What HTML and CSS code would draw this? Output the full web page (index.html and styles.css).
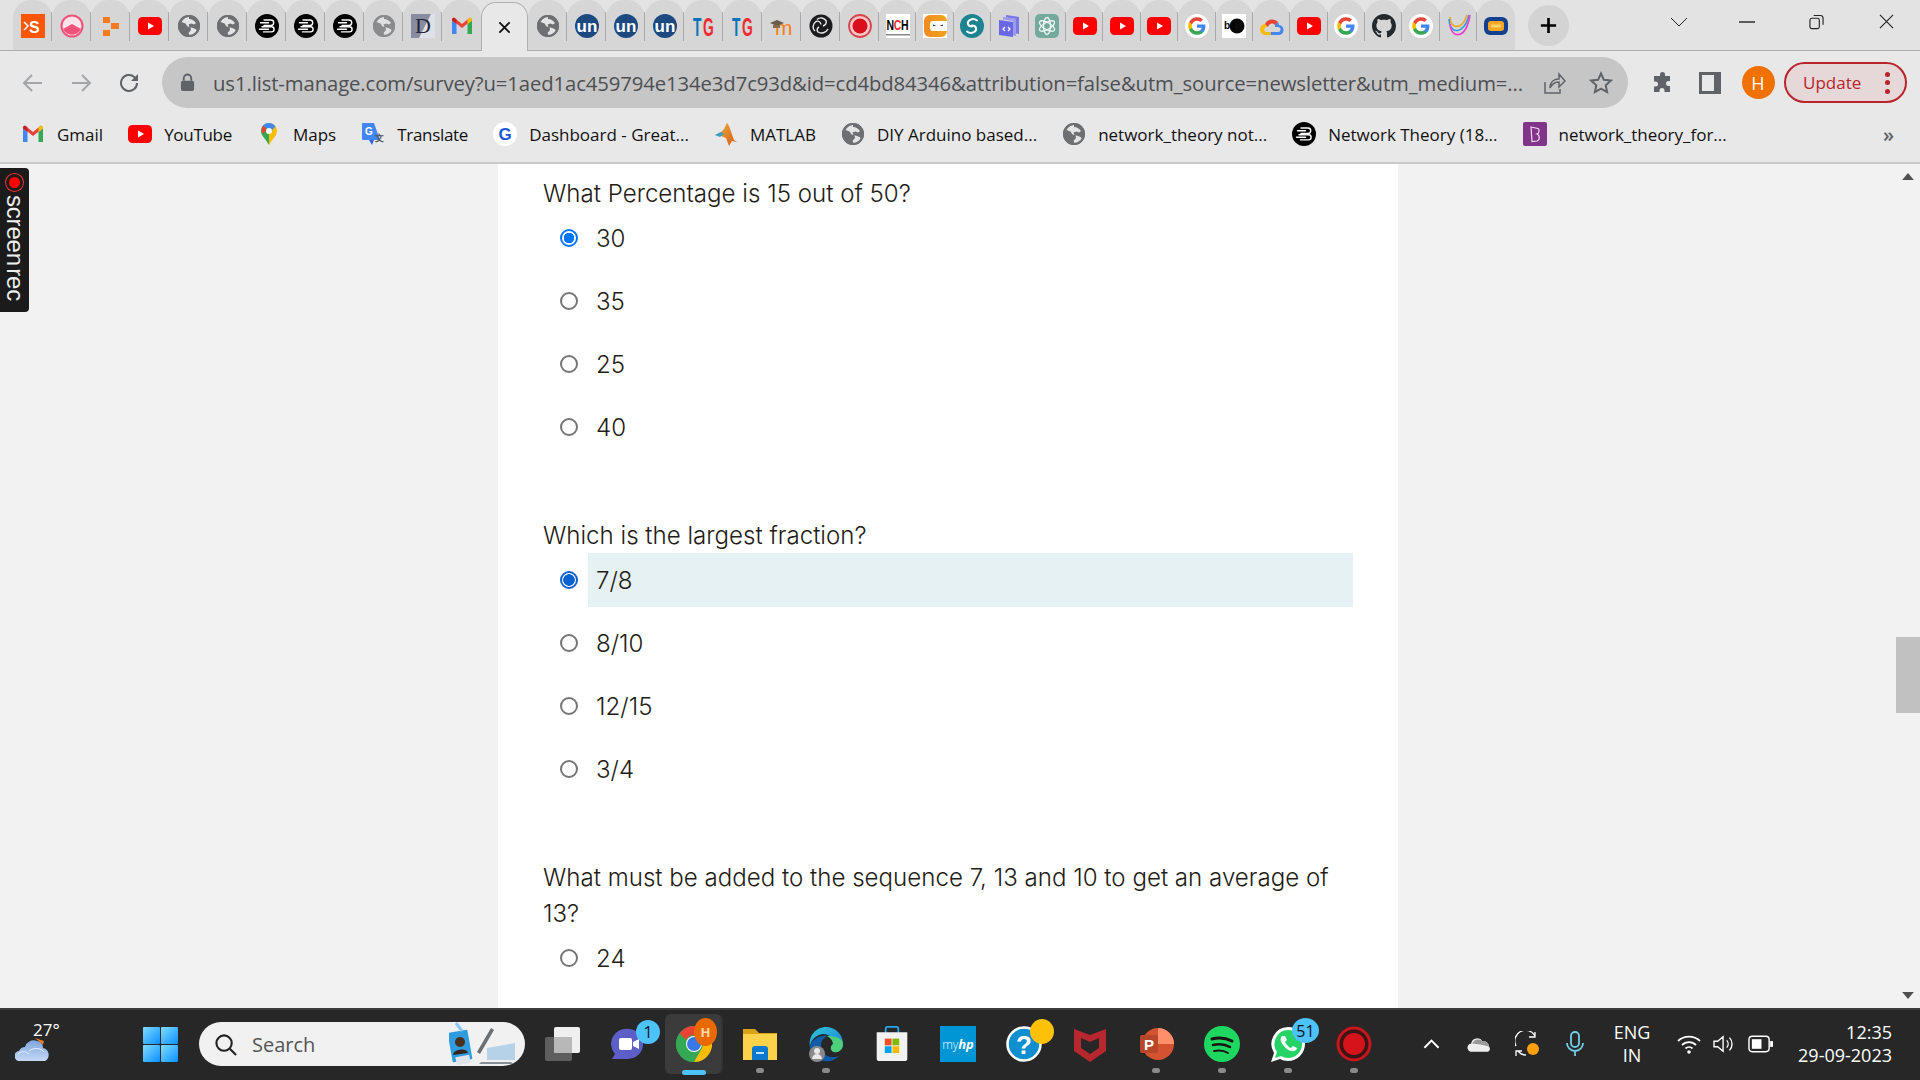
FILE: index.html
```html
<!DOCTYPE html>
<html lang="en">
<head>
<meta charset="utf-8">
<title>Survey</title>
<link rel="stylesheet" href="styles.css">
</head>
<body>
<svg class="defs" aria-hidden="true">
  <defs>
    <linearGradient id="win" x1="0" y1="0" x2="1" y2="1"><stop offset="0" stop-color="#7fdcff"/><stop offset="1" stop-color="#0a8fff"/></linearGradient>
    <linearGradient id="edge" x1="0" y1="0" x2="1" y2="1"><stop offset="0" stop-color="#2bc6d8"/><stop offset="1" stop-color="#1f7fd6"/></linearGradient>
    <linearGradient id="matl" x1="0" y1="0" x2="1" y2="1"><stop offset="0" stop-color="#e8b43a"/><stop offset="1" stop-color="#d8591c"/></linearGradient>
    <linearGradient id="ccg" x1="0" y1="0" x2="1" y2="0"><stop offset="0" stop-color="#f08a24"/><stop offset="1" stop-color="#f2a51a"/></linearGradient>
    <linearGradient id="cld" x1="0" y1="0" x2="0" y2="1"><stop offset="0" stop-color="#7fa6e0"/><stop offset="1" stop-color="#c4d9f5"/></linearGradient>
    <symbol id="i-s" viewBox="0 0 24 24"><rect width="24" height="24" fill="#fb5607"/><path d="M3 8l4 4-4 4" fill="none" stroke="#fff" stroke-width="1.600"/><text x="8" y="19" class="t-bold t16 f-w">S</text></symbol>
    <symbol id="i-pink" viewBox="0 0 24 24"><circle cx="12" cy="12" r="10.500" fill="#fde4e8" stroke="#f0527a" stroke-width="2"/><path d="M3 15l9-5 9 5a10 10 0 0 1-18 0z" fill="#f0527a"/></symbol>
    <symbol id="i-orange" viewBox="0 0 24 24"><path d="M4 3h7v6H4zM12 9h8v6h-8zM4 16h7v6H4z" fill="#f47a1f"/></symbol>
    <symbol id="i-yt" viewBox="0 0 24 24"><rect y="3" width="24" height="18" rx="4.500" fill="#f00"/><path d="M10 8.500l6 3.500-6 3.500z" fill="#fff"/></symbol>
    <symbol id="i-globe" viewBox="0 0 24 24"><circle cx="12" cy="12" r="11" fill="#6d6f72"/><path d="M12 2.500c-3 .4-6 2.500-7.500 5.500l4 1.500 2 3 3 .5.500 3-2.500 3 1.500 3c3-.3 6-2.500 7.500-5l-2-2-2.500-1-3.500-1-1-2.500 3-1 2.500 1 2-1.500c-1.500-2-4-4-7-4z" fill="#f2f2f2" opacity=".9"/><circle cx="12" cy="12" r="10" fill="none" stroke="#6d6f72" stroke-width="2"/></symbol>
    <symbol id="i-b3" viewBox="0 0 24 24"><circle cx="12" cy="12" r="12" fill="#000"/><g fill="none" stroke="#fff" stroke-width="1.400" stroke-linecap="round"><path d="M9 6h7a2.700 2.700 0 0 1 0 5.400H9"/><path d="M5.500 8.700h8"/><path d="M7 12.700h9.500a2.600 2.600 0 0 1 0 5.200H8.500"/><path d="M4.500 15.300h9"/></g></symbol>
    <symbol id="i-d" viewBox="0 0 24 24"><rect width="24" height="24" fill="#dfe0e8"/><path d="M0 0h20L8 24H0z" fill="#6c7088" opacity=".75"/><text x="12" y="19" class="t-serif-r t22 f-dk" text-anchor="middle">D</text></symbol>
    <symbol id="i-gm" viewBox="0 0 24 24"><path d="M2 6v14h4.500V10z" fill="#4285f4"/><path d="M17.500 10v10H22V6z" fill="#34a853"/><path d="M2 6l10 8 10-8-2-2.500-8 6.500-8-6.500z" fill="#ea4335"/><path d="M2 6.500V4.500L4 3.500l2.500 2V10z" fill="#c5221f"/><path d="M22 6.500V4.500L20 3.500l-2.500 2V10z" fill="#fbbc04"/></symbol>
    <symbol id="i-un" viewBox="0 0 24 24"><circle cx="12" cy="12" r="12" fill="#1c4a80"/><text x="12" y="17.500" class="t-bold t17 f-w" text-anchor="middle">un</text></symbol>
    <symbol id="i-tg" viewBox="0 0 24 24"><text transform="translate(1 22) scale(.66 1.220)" class="t-bold t21 f-bl">T</text><text transform="translate(11 22) scale(.66 1.220)" class="t-bold t21 f-rd">G</text></symbol>
    <symbol id="i-moodle" viewBox="0 0 24 24"><text x="5" y="21" class="t-norm t21 f-or">m</text><path d="M0 9l7-3 7 3-7 3z" fill="#6a5a4a"/><path d="M3 11v3h7v-3" fill="#8a6a4a"/></symbol>
    <symbol id="i-obs" viewBox="0 0 24 24"><circle cx="12" cy="12" r="11.500" fill="#1c1c1e"/><g fill="none" stroke="#eee" stroke-width="1.400"><path d="M8 5.500a6 6 0 0 1 9 1c1 2.500-.5 4.500-3 5.500"/><path d="M6 17c-3-2.500-2.500-7 1-9.500 2-1 4.500 0 5 3"/><path d="M19 15c-2 4-7 5-10 3-1.500-1.500-1-4 1-5"/></g></symbol>
    <symbol id="i-rec" viewBox="0 0 24 24"><circle cx="12" cy="12" r="11" fill="#f2c8c8" stroke="#d8454c" stroke-width="1.800"/><circle cx="12" cy="12" r="7.500" fill="#d9101b"/></symbol>
    <symbol id="i-nch" viewBox="0 0 24 24"><rect width="24" height="24" fill="#fff"/><text transform="translate(.5 16) scale(1.050 1.500)" class="t-bold t12 f-k">N<tspan class="f-rd">C</tspan>H</text><rect y="20" width="24" height="1.500" fill="#888"/></symbol>
    <symbol id="i-cc" viewBox="0 0 24 24"><rect width="24" height="24" fill="#fff"/><rect x="1" y="1" width="23" height="22" rx="6" fill="url(#ccg)"/><path d="M24 7H10a3 3 0 0 0-3 3v4a3 3 0 0 0 3 3h14z" fill="#fff"/><path d="M10 10.500l3.500 1.500H10zM20 10.500L16.500 12H20z" fill="#333"/></symbol>
    <symbol id="i-teal" viewBox="0 0 24 24"><circle cx="12" cy="12" r="12" fill="#1d8390"/><g fill="none" stroke="#fff" stroke-width="2" stroke-linecap="round"><path d="M17 6.500C13 3.500 7 6 8 10c.6 2 2.500 2.500 4 2.500"/><path d="M7 17.500c4 3 10 .5 9-3.500-.6-2-2.500-2.500-4-2.500"/></g></symbol>
    <symbol id="i-stack" viewBox="0 0 24 24"><path d="M8 1l13 2v17l-3-.5V5L8 3.500z" fill="#7a78e8"/><path d="M5 3l13 2v17l-3-.5V7L5 5.500z" fill="#9b9af0"/><path d="M1 6l14 2v15L1 21z" fill="#6a67e6"/><path d="M7 13l-2 2 2 2M10 13l2 2-2 2" fill="none" stroke="#fff" stroke-width="1.200"/></symbol>
    <symbol id="i-gpt" viewBox="0 0 24 24"><rect width="24" height="24" rx="5" fill="#74aa9c"/><g fill="none" stroke="#f0f6f4" stroke-width="1.300"><ellipse cx="12" cy="12" rx="3.500" ry="8.500"/><ellipse cx="12" cy="12" rx="3.500" ry="8.500" transform="rotate(60 12 12)"/><ellipse cx="12" cy="12" rx="3.500" ry="8.500" transform="rotate(120 12 12)"/></g></symbol>
    <symbol id="i-g" viewBox="0 0 24 24"><circle cx="12" cy="12" r="12" fill="#fff"/><g transform="translate(2.400 2.400) scale(.8)"><path d="M22.560 12.250c0-.78-.07-1.530-.2-2.250H12v4.260h5.920c-.26 1.370-1.040 2.530-2.210 3.310v2.770h3.570c2.080-1.920 3.280-4.740 3.280-8.090z" fill="#4285f4"/><path d="M12 23c2.970 0 5.460-.98 7.280-2.660l-3.570-2.770c-.98.66-2.230 1.060-3.710 1.060-2.860 0-5.290-1.930-6.160-4.530H2.180v2.840C3.990 20.530 7.700 23 12 23z" fill="#34a853"/><path d="M5.840 14.090c-.22-.66-.35-1.360-.35-2.090s.13-1.430.35-2.090V7.070H2.180C1.430 8.550 1 10.220 1 12s.43 3.450 1.180 4.930l2.850-2.220.81-.62z" fill="#fbbc05"/><path d="M12 5.380c1.620 0 3.060.56 4.210 1.640l3.150-3.150C17.450 2.090 14.970 1 12 1 7.700 1 3.990 3.470 2.180 7.070l3.660 2.840c.87-2.600 3.300-4.530 6.160-4.530z" fill="#ea4335"/></g></symbol>
    <symbol id="i-gblue" viewBox="0 0 24 24"><circle cx="12" cy="12" r="12" fill="#fff"/><text x="12" y="18" class="t-bold t17 f-gb" text-anchor="middle">G</text></symbol>
    <symbol id="i-bep" viewBox="0 0 24 24"><rect width="24" height="24" fill="#fff"/><circle cx="15" cy="12" r="7.500" fill="#0a0a0a"/><text x="2" y="15" class="t-bold t10 f-k">be</text></symbol>
    <symbol id="i-cloud" viewBox="0 0 24 24"><path d="M6 21a5.500 5.500 0 0 1-1-11l3 3a2.500 2.500 0 0 0-2 5l5 0v3z" fill="#fbbc04"/><path d="M5 10a8 8 0 0 1 13-2l-3 3a4 4 0 0 0-7 2z" fill="#ea4335"/><path d="M18 8a8 8 0 0 1 1 3 5 5 0 0 1-1 10h-7v-3h7a2 2 0 0 0 0-5h-3l0-2z" fill="#4285f4"/></symbol>
    <symbol id="i-gh" viewBox="0 0 16 16"><path fill="#24292e" d="M8 0C3.580 0 0 3.580 0 8c0 3.540 2.290 6.530 5.470 7.590.4.070.55-.17.55-.38 0-.19-.01-.82-.01-1.490-2.010.37-2.530-.49-2.690-.94-.09-.23-.48-.94-.82-1.130-.28-.15-.68-.52-.01-.53.63-.01 1.080.58 1.230.82.720 1.210 1.870.87 2.330.66.070-.52.28-.87.51-1.070-1.780-.2-3.640-.89-3.640-3.950 0-.87.31-1.590.82-2.150-.08-.2-.36-1.020.08-2.120 0 0 .67-.21 2.200.82.640-.18 1.320-.27 2-.27.680 0 1.360.09 2 .27 1.530-1.040 2.200-.82 2.200-.82.44 1.100.16 1.920.08 2.120.51.56.82 1.270.82 2.150 0 3.070-1.870 3.750-3.650 3.950.29.25.54.73.54 1.480 0 1.070-.01 1.930-.01 2.200 0 .21.15.46.55.38A8.013 8.013 0 0 0 16 8c0-4.420-3.580-8-8-8z"/></symbol>
    <symbol id="i-swirl" viewBox="0 0 24 24"><g fill="none" stroke-width="1.600"><path d="M3 3c0 12 12 14 17-2" stroke="#f2a51a"/><path d="M2 5c0 15 15 17 20-4" stroke="#2f9be0"/><path d="M3 10c1 15 16 16 20-9" stroke="#ef3ecf"/></g></symbol>
    <symbol id="i-pill" viewBox="0 0 24 24"><rect y="3" width="24" height="18" rx="6" fill="#13408f"/><rect x="4" y="7" width="16" height="10" rx="3" fill="#f5a623"/><rect x="7" y="10.500" width="10" height="3" rx="1" fill="#f7d26b"/></symbol>
    <symbol id="i-byju" viewBox="0 0 24 24"><rect width="24" height="24" rx="2" fill="#813588"/><path d="M8 5l7 1.500c2 1 1 5-1 5.500 3 1 3 6 0 7l-5 .5z" fill="none" stroke="#f3d9f3" stroke-width="1.200"/></symbol>
    <symbol id="i-maps" viewBox="0 0 24 24"><path d="M12 1a8 8 0 0 0-8 8c0 5 5 8 8 14V1z" fill="#34a853"/><path d="M12 1a8 8 0 0 1 8 8c0 5-5 8-8 14V1z" fill="#fbbc04"/><path d="M6 3.500L10 7 6 12a8 8 0 0 1 0-8.500z" fill="#ea4335"/><path d="M12 1a8 8 0 0 1 6.500 3.500L14 9l-4-2.500L6 3.500A8 8 0 0 1 12 1z" fill="#4285f4"/><circle cx="12" cy="9" r="3" fill="#fff"/></symbol>
    <symbol id="i-trans" viewBox="0 0 24 24"><path d="M11 5h11a1 1 0 0 1 1 1v14a1 1 0 0 1-1 1H12z" fill="#e8eaed"/><path d="M2 1h11l6 17H2a1 1 0 0 1-1-1V2a1 1 0 0 1 1-1z" fill="#4285f4"/><path d="M8 18h5l-2 5z" fill="#3367d6"/><text x="4" y="13" class="t-bold t10 f-w">G</text><text x="14" y="19" class="t-bold t9 f-gr">文</text></symbol>
    <symbol id="i-matlab" viewBox="0 0 24 24"><path d="M1 13l6-3 3-3 3-6c2 1 4 9 7 17l3 2-5-1-3 5-3-8-5-2z" fill="url(#matl)"/><path d="M1 13l6-3 3 2-4 3z" fill="#3aa0c8"/></symbol>
    <symbol id="i-puzzle" viewBox="0 0 24 24"><path d="M10 3.500a2.500 2.500 0 0 1 5 0V5h5v5h-1.500a2.500 2.500 0 0 0 0 5H20v6h-5.500v-1.500a2.500 2.500 0 0 0-5 0V21H4v-5.500h1.500a2.500 2.500 0 0 0 0-5H4V5h6z" fill="#5f6368"/></symbol>
    <symbol id="i-win" viewBox="0 0 35 35"><g fill="url(#win)"><rect width="17" height="17" rx="1"/><rect x="18" width="17" height="17" rx="1"/><rect y="18" width="17" height="17" rx="1"/><rect x="18" y="18" width="17" height="17" rx="1"/></g></symbol>
    <symbol id="i-weather" viewBox="0 0 36 24"><path d="M20 1l9 3-1 4z" fill="#e8792b"/><path d="M5 24a5 5 0 0 1-1-10 7 7 0 0 1 6-4 9 9 0 0 1 12-6c4 1 6 4 6 7a7 7 0 0 1 2 13z" fill="url(#cld)"/><path d="M3 17c4-4 9-2 11 0M14 14c5-4 12-3 15 1" fill="none" stroke="#e6effb" stroke-width="1"/></symbol>
    <symbol id="i-deco" viewBox="0 0 70 44"><rect x="1" y="9" width="20" height="30" rx="1" fill="#2f9ce0" transform="rotate(-10 11 24)"/><circle cx="11" cy="20" r="5" fill="#4a2f20"/><path d="M4 33c0-6 14-8 15-2z" fill="#33251c"/><path d="M7 1l6 8" stroke="#8dc6f0" stroke-width="3"/><rect x="7" y="34" width="14" height="8" fill="#dfe3ea" transform="rotate(-10 14 38)"/><path d="M28 30L42 6l3 2-14 24z" fill="#6b6f72"/><path d="M38 26l28-5v17l-28 0z" fill="#b6d2e8"/><path d="M32 40h30l3 2H30z" fill="#8a8f96"/></symbol>
    <symbol id="i-taskview" viewBox="0 0 36 36"><rect x="1" y="11" width="27" height="24" rx="2" fill="#5e5e5e"/><rect x="10" y="1" width="26" height="26" rx="2" fill="#fff" opacity=".93"/><path d="M10 11h18v16H10z" fill="#b8b8b8"/></symbol>
    <symbol id="i-teams" viewBox="0 0 36 36"><path d="M18 3a15 15 0 0 1 0 30H2l3-5A15 15 0 0 1 18 3z" fill="#5b5fc7"/><rect x="9" y="12" width="13" height="12" rx="2" fill="#fff"/><path d="M23 16l6-3v10l-6-3z" fill="#fff"/></symbol>
    <symbol id="i-chrome" viewBox="0 0 36 36"><circle cx="18" cy="18" r="18" fill="#34a853"/><path d="M18 0a18 18 0 0 1 15.600 9H18a9 9 0 0 0-8 5L3.400 7.500A18 18 0 0 1 18 0z" fill="#ea4335"/><path d="M3.400 7.500A18 18 0 0 0 18 36l7.500-13a9 9 0 0 1-15.500-9z" fill="#34a853"/><path d="M33.600 9A18 18 0 0 1 18 36l7.800-13.500A9 9 0 0 0 26 13z" fill="#fbbc04"/><path d="M33.600 9H18a9 9 0 0 1 8 5z" fill="#ea4335"/><circle cx="18" cy="18" r="8" fill="#fff"/><circle cx="18" cy="18" r="7" fill="#3b78e7"/></symbol>
    <symbol id="i-folder" viewBox="0 0 36 36"><path d="M1 3h12l4 4h18v6H1z" fill="#d9a21b"/><path d="M1 8h34v26H1z" fill="#fcd24b"/><path d="M10 23a3 3 0 0 1 3-3h10a3 3 0 0 1 3 3v11H10z" fill="#0b79d0"/><rect x="14" y="26" width="8" height="2" fill="#bfe3ff"/></symbol>
    <symbol id="i-edge" viewBox="0 0 36 36"><path d="M18 1a17 17 0 0 1 17 17c0 6-5 9-9 8s-4-6-1-8C25 10 18 6 11 9 4 12 2 18 2 21 0 10 8 1 18 1z" fill="url(#edge)"/><path d="M35 18c0 6-5 9-9 8s-4-6-1-8c0-3-2-6-6-8 8 0 16 2 16 8z" fill="#4dd07a"/><path d="M2 21a17 17 0 0 0 29 9c-5 2-14 2-17-6s2-13 6-14C11 9 3 14 2 21z" fill="#0f5ca8"/><circle cx="9" cy="28" r="8" fill="#8a8a8a"/><circle cx="9" cy="25" r="3" fill="#e8e8e8"/><path d="M4 33a5 5 0 0 1 10 0z" fill="#e8e8e8"/></symbol>
    <symbol id="i-store" viewBox="0 0 36 40"><path d="M11 8V3a2 2 0 0 1 2-2h10a2 2 0 0 1 2 2v5" fill="none" stroke="#22a7e8" stroke-width="2"/><path d="M1 7h34v29a3 3 0 0 1-3 3H4a3 3 0 0 1-3-3z" fill="#f2f2f2"/><rect x="10" y="14" width="7.500" height="7.500" fill="#f25022"/><rect x="18.500" y="14" width="7.500" height="7.500" fill="#7fba00"/><rect x="10" y="22.500" width="7.500" height="7.500" fill="#00a4ef"/><rect x="18.500" y="22.500" width="7.500" height="7.500" fill="#ffb900"/></symbol>
    <symbol id="i-help" viewBox="0 0 36 36"><circle cx="18" cy="18" r="16.500" fill="#0f8fd0" stroke="#fff" stroke-width="2.500"/><text x="18" y="28" class="t-bold t26 f-w" text-anchor="middle">?</text></symbol>
    <symbol id="i-mcafee" viewBox="0 0 32 36"><path d="M0 3l16 6 16-6v22L16 36 0 25zM7 12v10l9 6 9-6V12l-9 4z" fill="#b7282e" fill-rule="evenodd"/></symbol>
    <symbol id="i-ppt" viewBox="0 0 36 36"><circle cx="20" cy="18" r="16" fill="#d35230"/><path d="M20 2a16 16 0 0 1 16 16H20z" fill="#ff8f6b"/><rect x="2" y="9" width="18" height="18" rx="2" fill="#b7472a"/><text x="11" y="24" class="t-bold t15 f-w" text-anchor="middle">P</text></symbol>
    <symbol id="i-spotify" viewBox="0 0 36 36"><circle cx="18" cy="18" r="18" fill="#1ed760"/><g fill="none" stroke="#191414" stroke-linecap="round"><path d="M8 13c7-2 14-1 20 2" stroke-width="3"/><path d="M9 19c6-1.500 12-1 17 2" stroke-width="2.500"/><path d="M10 25c5-1 10-.7 14 2" stroke-width="2"/></g></symbol>
    <symbol id="i-wa" viewBox="0 0 36 36"><path d="M18 1a17 17 0 0 1 0 34c-3 0-6-1-8-2l-9 3 3-9A17 17 0 0 1 18 1z" fill="#fff"/><path d="M18 4a14 14 0 0 1 0 28c-3 0-5-1-7-2l-6 2 2-6A14 14 0 0 1 18 4z" fill="#25d366"/><path d="M12 10c-2 2-2 5 1 9s8 7 11 6c2-.5 3-2 3-3l-4-2-2 2c-2-.5-5-4-6-6l2-2-2-4z" fill="#fff"/></symbol>
    <symbol id="i-recbig" viewBox="0 0 36 36"><circle cx="18" cy="18" r="16" fill="#3a1515" stroke="#c8161d" stroke-width="3"/><circle cx="18" cy="18" r="11" fill="#d6131b"/></symbol>
    <symbol id="i-cloudw" viewBox="0 0 24 16"><path d="M5 15a4 4 0 0 1-1-8 6 6 0 0 1 11-2 5 5 0 0 1 6 5 3 3 0 0 1-1 5z" fill="#eee"/><path d="M5 7a6 6 0 0 1 10-2 5 5 0 0 1 6 5l-8-2z" fill="#999"/></symbol>
  </defs>
</svg>

<header class="chrome">
  <div class="tabstrip">
    <div class="tabs">
      <div class="tab"><div class="tab-in"><svg class="fav"><use href="#i-s"/></svg></div></div>
      <div class="tab"><div class="tab-in"><svg class="fav"><use href="#i-pink"/></svg></div></div>
      <div class="tab"><div class="tab-in"><svg class="fav"><use href="#i-orange"/></svg></div></div>
      <div class="tab"><div class="tab-in"><svg class="fav"><use href="#i-yt"/></svg></div></div>
      <div class="tab"><div class="tab-in"><svg class="fav"><use href="#i-globe"/></svg></div></div>
      <div class="tab"><div class="tab-in"><svg class="fav"><use href="#i-globe"/></svg></div></div>
      <div class="tab"><div class="tab-in"><svg class="fav"><use href="#i-b3"/></svg></div></div>
      <div class="tab"><div class="tab-in"><svg class="fav"><use href="#i-b3"/></svg></div></div>
      <div class="tab"><div class="tab-in"><svg class="fav"><use href="#i-b3"/></svg></div></div>
      <div class="tab"><div class="tab-in"><svg class="fav faded"><use href="#i-globe"/></svg></div></div>
      <div class="tab"><div class="tab-in"><svg class="fav"><use href="#i-d"/></svg></div></div>
      <div class="tab"><div class="tab-in no-sep"><svg class="fav"><use href="#i-gm"/></svg></div></div>
      <div class="tab-active"><svg class="close" viewBox="0 0 14 14"><path d="M1.500 1.500l11 11M12.500 1.500l-11 11"/></svg></div>
      <div class="tab"><div class="tab-in"><svg class="fav"><use href="#i-globe"/></svg></div></div>
      <div class="tab"><div class="tab-in"><svg class="fav"><use href="#i-un"/></svg></div></div>
      <div class="tab"><div class="tab-in"><svg class="fav"><use href="#i-un"/></svg></div></div>
      <div class="tab"><div class="tab-in"><svg class="fav"><use href="#i-un"/></svg></div></div>
      <div class="tab"><div class="tab-in"><svg class="fav"><use href="#i-tg"/></svg></div></div>
      <div class="tab"><div class="tab-in"><svg class="fav"><use href="#i-tg"/></svg></div></div>
      <div class="tab"><div class="tab-in"><svg class="fav"><use href="#i-moodle"/></svg></div></div>
      <div class="tab"><div class="tab-in"><svg class="fav"><use href="#i-obs"/></svg></div></div>
      <div class="tab"><div class="tab-in"><svg class="fav"><use href="#i-rec"/></svg></div></div>
      <div class="tab narrow"><div class="tab-in"><svg class="fav"><use href="#i-nch"/></svg></div></div>
      <div class="tab narrow"><div class="tab-in"><svg class="fav"><use href="#i-cc"/></svg></div></div>
      <div class="tab narrow"><div class="tab-in"><svg class="fav"><use href="#i-teal"/></svg></div></div>
      <div class="tab narrow"><div class="tab-in"><svg class="fav"><use href="#i-stack"/></svg></div></div>
      <div class="tab narrow"><div class="tab-in"><svg class="fav"><use href="#i-gpt"/></svg></div></div>
      <div class="tab narrow"><div class="tab-in"><svg class="fav"><use href="#i-yt"/></svg></div></div>
      <div class="tab narrow"><div class="tab-in"><svg class="fav"><use href="#i-yt"/></svg></div></div>
      <div class="tab narrow"><div class="tab-in"><svg class="fav"><use href="#i-yt"/></svg></div></div>
      <div class="tab narrow"><div class="tab-in"><svg class="fav"><use href="#i-g"/></svg></div></div>
      <div class="tab narrow"><div class="tab-in"><svg class="fav"><use href="#i-bep"/></svg></div></div>
      <div class="tab narrow"><div class="tab-in"><svg class="fav"><use href="#i-cloud"/></svg></div></div>
      <div class="tab narrow"><div class="tab-in"><svg class="fav"><use href="#i-yt"/></svg></div></div>
      <div class="tab narrow"><div class="tab-in"><svg class="fav"><use href="#i-g"/></svg></div></div>
      <div class="tab narrow"><div class="tab-in"><svg class="fav"><use href="#i-gh"/></svg></div></div>
      <div class="tab narrow"><div class="tab-in"><svg class="fav"><use href="#i-g"/></svg></div></div>
      <div class="tab narrow"><div class="tab-in"><svg class="fav"><use href="#i-swirl"/></svg></div></div>
      <div class="tab narrow"><div class="tab-in no-sep"><svg class="fav"><use href="#i-pill"/></svg></div></div>
    </div>
    <div class="newtab"><svg viewBox="0 0 20 20"><path d="M10 2v16M2 10h16"/></svg></div>
    <div class="winctl">
      <svg class="wc wc-drop" viewBox="0 0 18 10"><path d="M1 1l8 8 8-8"/></svg>
      <svg class="wc wc-min" viewBox="0 0 16 2"><path d="M0 1h16"/></svg>
      <svg class="wc wc-max" viewBox="0 0 16 16"><rect x="1" y="4" width="10" height="11" rx="2"/><path d="M5 1h7a3 3 0 0 1 3 3v7"/></svg>
      <svg class="wc wc-close" viewBox="0 0 16 16"><path d="M1 1l14 14M15 1L1 15"/></svg>
    </div>
  </div>

  <div class="toolbar">
    <div class="tb-slot"><svg class="tb-ic stroke-light" viewBox="0 0 24 24"><path d="M21 12H4M11 4l-8 8 8 8"/></svg></div>
    <div class="tb-slot"><svg class="tb-ic stroke-light" viewBox="0 0 24 24"><path d="M3 12h17M13 4l8 8-8 8"/></svg></div>
    <div class="tb-slot"><svg class="tb-ic stroke-dark" viewBox="0 0 24 24"><path d="M20 12a8 8 0 1 1-2.500-5.800L20 8.500"/><path class="solid" d="M21 3v7h-7z"/></svg></div>
    <div class="omni">
      <svg class="lock" viewBox="0 0 16 20"><path d="M4 8V5.500a4 4 0 0 1 8 0V8" fill="none" stroke="#5f6368" stroke-width="2"/><rect x="1" y="8" width="14" height="11" rx="2" fill="#5f6368"/></svg>
      <div class="url">us1.list-manage.com/survey?u=1aed1ac459794e134e3d7c93d&amp;id=cd4bd84346&amp;attribution=false&amp;utm_source=newsletter&amp;utm_medium=...</div>
      <svg class="om-ic share" viewBox="0 0 24 24"><path d="M3 11v11h15v-4M8 17c0-6 4-9 9-9V3l6 7-6 6v-5c-4 0-7 2-9 6z"/></svg>
      <svg class="om-ic star" viewBox="0 0 24 24"><path d="M12 2.500l2.900 6.300 6.900.8-5.100 4.700 1.400 6.800-6.100-3.400-6.100 3.400 1.400-6.800L2.200 9.600l6.900-.8z"/></svg>
    </div>
    <div class="tb-slot"><svg class="tb-ic"><use href="#i-puzzle"/></svg></div>
    <div class="tb-slot"><div class="sidepanel"><div class="sidepanel-in"></div></div></div>
    <div class="tb-slot"><div class="avatar">H</div></div>
    <div class="update"><span>Update</span><span class="dots"><i></i><i></i><i></i></span></div>
  </div>

  <nav class="bookmarks">
    <div class="bm"><svg class="bm-ic"><use href="#i-gm"/></svg><span>Gmail</span></div>
    <div class="bm"><svg class="bm-ic"><use href="#i-yt"/></svg><span class="tight">YouTube</span></div>
    <div class="bm"><svg class="bm-ic"><use href="#i-maps"/></svg><span>Maps</span></div>
    <div class="bm"><svg class="bm-ic"><use href="#i-trans"/></svg><span class="tight">Translate</span></div>
    <div class="bm"><svg class="bm-ic"><use href="#i-gblue"/></svg><span>Dashboard - Great...</span></div>
    <div class="bm"><svg class="bm-ic"><use href="#i-matlab"/></svg><span>MATLAB</span></div>
    <div class="bm"><svg class="bm-ic"><use href="#i-globe"/></svg><span>DIY Arduino based...</span></div>
    <div class="bm"><svg class="bm-ic"><use href="#i-globe"/></svg><span>network_theory not...</span></div>
    <div class="bm"><svg class="bm-ic"><use href="#i-b3"/></svg><span>Network Theory (18...</span></div>
    <div class="bm"><svg class="bm-ic"><use href="#i-byju"/></svg><span>network_theory_for...</span></div>
    <div class="bm-more">»</div>
  </nav>
</header>

<main class="viewport">
  <div class="recbadge"><span class="recdot"></span><span class="rectext">screen rec</span></div>
  <div class="page">
    <section class="sheet">
      <div class="question">
        <p class="q-label">What Percentage is 15 out of 50?</p>
        <div class="option"><span class="radio on"></span><span class="opt-text">30</span></div>
        <div class="option"><span class="radio"></span><span class="opt-text">35</span></div>
        <div class="option"><span class="radio"></span><span class="opt-text">25</span></div>
        <div class="option"><span class="radio"></span><span class="opt-text">40</span></div>
      </div>
      <div class="question">
        <p class="q-label">Which is the largest fraction?</p>
        <div class="option"><span class="radio on dark"></span><span class="opt-text hl">7/8</span></div>
        <div class="option"><span class="radio"></span><span class="opt-text">8/10</span></div>
        <div class="option"><span class="radio"></span><span class="opt-text">12/15</span></div>
        <div class="option"><span class="radio"></span><span class="opt-text">3/4</span></div>
      </div>
      <div class="question">
        <p class="q-label">What must be added to the sequence 7, 13 and 10 to get an average of 13?</p>
        <div class="option"><span class="radio"></span><span class="opt-text">24</span></div>
      </div>
    </section>
  </div>
  <aside class="scrollbar">
    <svg class="sb-arrow" viewBox="0 0 10 6"><path d="M5 0l5 6H0z"/></svg>
    <div class="sb-track"><div class="sb-thumb"></div></div>
    <svg class="sb-arrow" viewBox="0 0 10 6"><path d="M5 6L0 0h10z"/></svg>
  </aside>
</main>

<footer class="taskbar">
  <div class="weather"><span class="temp">27°</span><svg class="weather-ic"><use href="#i-weather"/></svg></div>
  <div class="start"><svg class="start-ic"><use href="#i-win"/></svg></div>
  <div class="search">
    <svg class="search-ic" viewBox="0 0 24 24"><circle cx="10.500" cy="10.500" r="8"/><path d="M16.500 16.500L23 23"/></svg>
    <span class="search-text">Search</span>
    <svg class="search-deco"><use href="#i-deco"/></svg>
  </div>
  <div class="apps">
    <div class="app"><svg class="app-ic"><use href="#i-taskview"/></svg></div>
    <div class="app"><svg class="app-ic"><use href="#i-teams"/></svg><span class="badge b-teams">1</span></div>
    <div class="app app-active"><svg class="app-ic"><use href="#i-chrome"/></svg><span class="badge b-h">H</span><span class="underline"></span></div>
    <div class="app"><svg class="app-ic"><use href="#i-folder"/></svg><span class="dot"></span></div>
    <div class="app"><svg class="app-ic"><use href="#i-edge"/></svg><span class="dot"></span></div>
    <div class="app"><svg class="app-ic"><use href="#i-store"/></svg></div>
    <div class="app"><div class="myhp"><span class="my">my</span><em>hp</em></div></div>
    <div class="app"><svg class="app-ic"><use href="#i-help"/></svg><span class="badge b-yellow"></span></div>
    <div class="app"><svg class="app-ic"><use href="#i-mcafee"/></svg></div>
    <div class="app"><svg class="app-ic"><use href="#i-ppt"/></svg><span class="dot"></span></div>
    <div class="app"><svg class="app-ic"><use href="#i-spotify"/></svg><span class="dot"></span></div>
    <div class="app"><svg class="app-ic"><use href="#i-wa"/></svg><span class="badge b-wa">51</span><span class="dot"></span></div>
    <div class="app"><svg class="app-ic"><use href="#i-recbig"/></svg><span class="dot"></span></div>
  </div>
  <div class="tray">
    <div class="tr-slot"><svg class="tr-ic chev" viewBox="0 0 18 10"><path d="M1.500 9L9 1.500 16.500 9"/></svg></div>
    <div class="tr-slot"><svg class="tr-ic cloud-w"><use href="#i-cloudw"/></svg></div>
    <div class="tr-slot"><svg class="tr-ic sync" viewBox="0 0 24 26"><path d="M1 15A10.500 10.500 0 0 1 20 5M20 1v5h-6M1 25v-5h6M3 20a10 10 0 0 0 8 4"/><circle class="sync-dot" cx="18" cy="18" r="6"/></svg></div>
    <div class="tr-slot"><svg class="tr-ic mic" viewBox="0 0 18 26"><rect x="5" y="1" width="8" height="15" rx="4"/><path d="M1 12a8 8 0 0 0 16 0M9 20v5"/></svg></div>
    <div class="lang">ENG<br>IN</div>
    <div class="tr-icons">
      <svg class="wifi" viewBox="0 0 24 20"><path d="M1 7a16 16 0 0 1 22 0M5 11a10 10 0 0 1 14 0M8.500 14.500a5 5 0 0 1 7 0"/><circle cx="12" cy="18" r="1.800"/></svg>
      <svg class="vol" viewBox="0 0 24 22"><path d="M1 8v6h4l6 5V3L5 8zM15 7a6 6 0 0 1 0 8M18 4a10 10 0 0 1 0 14"/></svg>
      <svg class="batt" viewBox="0 0 26 18"><rect x="1" y="1" width="21" height="16" rx="3.500"/><rect class="fill" x="4" y="4" width="10" height="10"/><rect class="fill" x="23" y="6" width="3" height="6"/></svg>
    </div>
    <div class="clock">12:35<br>29-09-2023</div>
  </div>
</footer>
</body>
</html>
```
FILE: styles.css
```css
* { box-sizing: border-box; }
html, body { margin: 0; padding: 0; }
body { width: 1920px; height: 1080px; overflow: hidden; display: flex; flex-direction: column; font-family: "Open Sans", "Noto Sans", sans-serif; background: #f2f2f2; }
.defs { width: 0; height: 0; display: block; position: absolute; }
svg { display: block; flex: none; }

.t-bold { font-family: "Liberation Sans", sans-serif; font-weight: 700; }
.t-norm { font-family: "Liberation Sans", sans-serif; }
.t-serif-r { font-family: "Liberation Serif", serif; }
.t9 { font-size: 9px; } .t10 { font-size: 10px; } .t12 { font-size: 10px; letter-spacing: -.3px; } .t15 { font-size: 15px; } .t16 { font-size: 16px; } .t17 { font-size: 17px; } .t21 { font-size: 21px; } .t22 { font-size: 22px; } .t26 { font-size: 26px; }
.f-w { fill: #fff; } .f-k { fill: #000; } .f-dk { fill: #22243a; } .f-bl { fill: #0a73b8; } .f-rd { fill: #ee2b33; } .f-or { fill: #f98012; } .f-gb { fill: #1a57d6; } .f-gr { fill: #555; }

/* Browser chrome */
.chrome { flex: none; background: #e8e8e8; border-bottom: 2px solid #c9c9c9; }
.tabstrip { height: 51px; display: flex; background: #e3e3e3; border-bottom: 1px solid #aeaeae; padding-left: 13px; }
.tabs { display: flex; height: 50px; }
.tab { width: 39px; height: 50px; background: #d6d6d6; border-radius: 18px 18px 0 0; display: flex; align-items: center; padding-top: 2px; }
.tab.narrow { width: 37.400px; }
.tab-in { width: 100%; height: 29px; border-right: 1px solid #a9a9a9; display: flex; align-items: center; justify-content: center; padding-left: 1px; }
.tab-in.no-sep { border-right: 0; }
.fav { width: 24px; height: 24px; }
.faded { opacity: .72; }
.tab-active { width: 47px; height: 49px; margin-top: 2px; background: #e8e8e8; border: 1px solid #b0b0b0; border-bottom: 0; border-radius: 15px 15px 0 0; display: flex; align-items: center; justify-content: center; padding-top: 1px; z-index: 1; margin-bottom: -1px; }
.close { width: 13px; height: 13px; fill: none; stroke: #111; stroke-width: 2; }
.newtab { width: 41px; height: 41px; margin: 5px 0 0 13px; border-radius: 50%; background: #d3d3d3; display: flex; align-items: center; justify-content: center; }
.newtab svg { width: 19px; height: 19px; fill: none; stroke: #000; stroke-width: 2.800; }
.winctl { margin-left: auto; display: flex; }
.wc { fill: none; stroke: #222; stroke-width: 1; }
.wc-drop { width: 18px; height: 10px; margin: 17px 51px 0 0; }
.wc-min { width: 16px; height: 2px; margin: 21px 53.500px 0 0; stroke-width: 1.400; }
.wc-max { width: 15px; height: 16px; margin: 14px 55px 0 0; stroke-width: 1.200; }
.wc-close { width: 15px; height: 15px; margin: 14px 26.500px 0 0; stroke-width: 1.200; }

.toolbar { height: 63px; display: flex; align-items: center; padding: 0 12px 0 9px; }
.tb-slot { width: 48px; height: 48px; display: flex; align-items: center; justify-content: center; }
.tb-ic { width: 24px; height: 24px; fill: none; stroke-width: 2; }
.stroke-light { stroke: #a3a5a8; }
.stroke-dark { stroke: #5f6368; }
.solid { fill: #5f6368; stroke: none; }
.omni { width: 1466px; height: 51px; margin: 0 10px 0 9px; border-radius: 26px; background: #c6c6c6; display: flex; align-items: center; padding: 0 15px 0 18px; }
.lock { width: 15px; height: 19px; }
.url { flex: 1; margin-left: 18px; white-space: nowrap; overflow: hidden; font-size: 20.300px; color: #4d4f52; letter-spacing: -.1px; }
.om-ic { width: 24px; height: 24px; fill: none; stroke: #5f6368; stroke-width: 1.500; }
.share { margin: 0 23px 0 16px; }
.star { stroke-width: 2; }
.sidepanel { width: 22px; height: 22px; background: #5f6368; padding: 3px 7px 3px 3px; }
.sidepanel-in { width: 100%; height: 100%; background: #e8e8e8; }
.avatar { width: 33px; height: 33px; border-radius: 50%; background: #f07000; color: #fff; font-size: 18px; display: flex; align-items: center; justify-content: center; }
.update { width: 123px; height: 41px; margin-left: 2px; border: 2px solid #b9232a; border-radius: 21px; background: #e6d8d8; color: #b9232a; font-size: 17px; display: flex; align-items: center; justify-content: space-between; padding: 0 15px 0 17px; }
.dots { display: flex; flex-direction: column; gap: 3.500px; }
.dots i { display: block; width: 5px; height: 5px; border-radius: 50%; background: #b9232a; }

.bookmarks { height: 48px; padding: 0 0 8px 21px; display: flex; align-items: center; gap: 25px; font-size: 17px; color: #111; }
.bm { display: flex; align-items: center; gap: 12px; white-space: nowrap; }
.bm-ic { width: 24px; height: 24px; }
.tight { letter-spacing: -.3px; }
.bm-more { margin-left: auto; margin-right: 26px; color: #5f6368; font-size: 20px; font-weight: 600; }

/* Page */
.viewport { flex: 1; min-height: 0; display: flex; position: relative; overflow: hidden; }
.page { flex: 1; display: flex; justify-content: center; }
.sheet { width: 900px; height: 100%; background: #fff; padding: 11px 45px 0; color: #241c15; font-family: Inter, "Liberation Sans", sans-serif; font-size: 24.100px; font-weight: 350; overflow: hidden; }
.question { margin-bottom: 63px; }
.q-label { margin: 0 0 -1px; padding-top: 1px; line-height: 36px; }
.option { display: flex; height: 54px; margin-bottom: 9px; align-items: center; }
.option:last-child { margin-bottom: 0; }
.radio { flex: none; width: 18px; height: 18px; margin: 0 10px 0 17px; border-radius: 50%; border: 2px solid #767676; background: #fff; }
.radio.on { border-color: #0075ff; background: radial-gradient(circle, #0075ff 0 5px, #fff 5.500px); }
.radio.dark { border-color: #0a62d0; background: radial-gradient(circle, #0a62d0 0 5.500px, #fff 6px); }
.opt-text { flex: 1; height: 54px; display: flex; align-items: center; padding-left: 8px; }
.hl { background: #e6f1f3; }

.scrollbar { flex: none; width: 24px; background: #f2f2f2; display: flex; flex-direction: column; align-items: center; padding: 9px 0; }
.sb-arrow { width: 12px; height: 7px; fill: #505050; }
.sb-track { flex: 1; padding-top: 457px; width: 100%; }
.sb-thumb { width: 100%; height: 76px; background: #c1c1c1; }

.recbadge { position: absolute; left: 0; top: 4px; width: 29px; height: 144px; background: #1b1b1b; border-radius: 0 4px 4px 0; display: flex; flex-direction: column; align-items: center; padding-top: 6px; gap: 4px; z-index: 2; }
.recdot { flex: none; width: 17px; height: 17px; border-radius: 50%; background: #f00; border: 3px solid #1b1b1b; box-shadow: 0 0 0 1px #e33; }
.rectext { writing-mode: vertical-rl; color: #eee; font-family: "Liberation Sans", sans-serif; font-size: 24px; line-height: 24px; letter-spacing: -.2px; word-spacing: -4px; }

/* Taskbar */
.taskbar { flex: none; height: 72px; padding-bottom: 2px; background: #272727; border-top: 2px solid #3c3c3c; display: flex; align-items: center; color: #fff; }
.weather { width: 130px; height: 100%; padding-left: 15px; display: flex; flex-direction: column; }
.temp { font-size: 17px; line-height: 20px; margin: 10px 0 0 18px; }
.weather-ic { width: 36px; height: 24px; margin-top: -3px; }
.start { width: 60px; display: flex; justify-content: center; }
.start-ic { width: 35px; height: 35px; }
.search { width: 326px; height: 44px; margin: 0 4px 0 9px; border-radius: 22px; background: #f1f1f1; display: flex; align-items: center; padding: 0 6px 0 15px; }
.search-ic { width: 23px; height: 23px; fill: none; stroke: #222; stroke-width: 2.200; }
.search-text { margin-left: 15px; font-size: 20px; color: #555; flex: 1; }
.search-deco { width: 70px; height: 44px; }
.apps { display: flex; height: 100%; }
.app { width: 66px; height: 100%; display: flex; align-items: center; justify-content: center; position: relative; }
.app-ic { width: 36px; height: 36px; }
.app-active::before { content: ""; position: absolute; left: 4px; top: 4px; width: 56px; height: 60px; background: #3b3b3b; border-radius: 6px; box-shadow: 2px 0 0 #333; }
.app-active .app-ic { position: relative; }
.underline { position: absolute; left: 21px; bottom: 3px; width: 24px; height: 5px; border-radius: 3px; background: #4cc2ff; }
.dot { position: absolute; left: 29px; bottom: 5px; width: 8px; height: 5px; border-radius: 3px; background: #8a8a8a; }
.badge { position: absolute; border-radius: 50%; display: flex; align-items: center; justify-content: center; font-size: 16px; color: #111; }
.b-teams { left: 41px; top: 10px; width: 24px; height: 24px; background: #4cc2ff; }
.b-h { left: 33px; top: 8px; width: 23px; height: 28px; background: #ea6a00; color: #ffd9b0; font-weight: 700; font-size: 13px; }
.b-yellow { left: 39px; top: 9px; width: 24px; height: 25px; background: #ffc107; }
.b-wa { left: 37px; top: 8px; width: 27px; height: 25px; background: #4cc2ff; }
.myhp { width: 36px; height: 36px; background: #0096d6; color: #fff; font-size: 12px; display: flex; align-items: center; justify-content: center; }
.my { font-weight: 300; }
.myhp em { font-weight: 700; font-size: 13px; }
.tray { flex: 1; display: flex; align-items: center; height: 100%; padding-left: 20px; }
.tr-slot { width: 48px; display: flex; justify-content: center; }
.tr-ic { fill: none; stroke: #fff; }
.chev { width: 17px; height: 10px; stroke-width: 2; }
.cloud-w { width: 25px; height: 17px; stroke: none; }
.sync { width: 24px; height: 26px; stroke-width: 1.300; }
.sync-dot { fill: #ff9f0a; stroke: none; }
.mic { width: 18px; height: 26px; stroke: #74cfe8; stroke-width: 1.800; }
.lang { width: 66px; text-align: center; font-size: 18px; line-height: 23px; }
.tr-icons { display: flex; align-items: center; margin-left: 12px; }
.wifi { width: 24px; height: 20px; fill: none; stroke: #fff; stroke-width: 1.800; margin-right: 11px; }
.wifi circle { fill: #fff; stroke: none; }
.vol { width: 24px; height: 20px; fill: none; stroke: #fff; stroke-width: 1.500; margin-right: 12px; }
.batt { width: 25px; height: 18px; fill: none; stroke: #fff; stroke-width: 1.500; }
.batt .fill { fill: #fff; stroke: none; }
.clock { flex: 1; text-align: right; padding-right: 28px; font-size: 18px; line-height: 23px; }
```
